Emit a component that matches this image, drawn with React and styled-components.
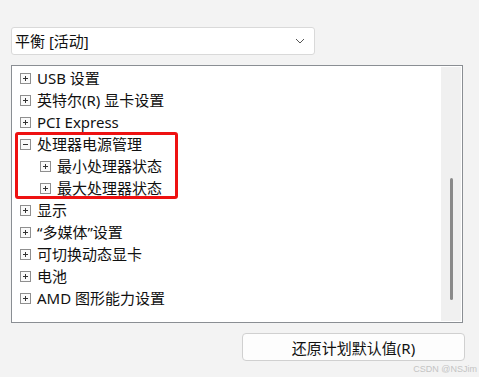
import React from "react";
import styled, { createGlobalStyle } from "styled-components";

const GlobalStyle = createGlobalStyle`
  html, body {
    margin: 0;
    padding: 0;
    background: #f3f3f3;
  }
  body {
    font-family: "Noto Sans", "Noto Sans CJK SC", sans-serif;
    color: #1a1a1a;
  }
`;

const items = [
  { label: "USB 设置", level: 0, open: false },
  { label: "英特尔(R) 显卡设置", level: 0, open: false },
  { label: "PCI Express", level: 0, open: false },
  { label: "处理器电源管理", level: 0, open: true },
  { label: "最小处理器状态", level: 1, open: false },
  { label: "最大处理器状态", level: 1, open: false },
  { label: "显示", level: 0, open: false },
  { label: "“多媒体”设置", level: 0, open: false },
  { label: "可切换动态显卡", level: 0, open: false },
  { label: "电池", level: 0, open: false },
  { label: "AMD 图形能力设置", level: 0, open: false },
];

const App = () => {
  return (
    <Page>
      <GlobalStyle />
      <Select>
        <span>平衡 [活动]</span>
        <svg width="10" height="6" viewBox="0 0 10 6">
          <path d="M1 1 L5 5 L9 1" fill="none" stroke="#555" strokeWidth="1" />
        </svg>
      </Select>
      <ListBox>
        <Tree>
          {items.map((it) => (
            <Row key={it.label} $level={it.level}>
              <Toggle>
                <svg width="11" height="11" viewBox="0 0 11 11">
                  <rect x="0.5" y="0.5" width="10" height="10" fill="#fafafa" stroke="#8f8f8f" />
                  <path d="M3 5.5 H8" stroke="#333" strokeWidth="1" />
                  {!it.open && <path d="M5.5 3 V8" stroke="#333" strokeWidth="1" />}
                </svg>
              </Toggle>
              <Label>{it.label}</Label>
            </Row>
          ))}
          <Highlight />
        </Tree>
        <Track>
          <Thumb />
        </Track>
      </ListBox>
      <Footer>
        <Button>还原计划默认值(R)</Button>
      </Footer>
      <Watermark>CSDN @NSJim</Watermark>
    </Page>
  );
};

export default App;

const Page = styled.div`
  position: relative;
  width: 479px;
  height: 377px;
  box-sizing: border-box;
  padding: 27px 0 0 11px;
  overflow: hidden;
`;

const Select = styled.div`
  width: 304px;
  height: 28px;
  box-sizing: border-box;
  background: #fff;
  border: 1px solid #d9d9d9;
  border-radius: 3px;
  display: flex;
  align-items: center;
  justify-content: space-between;
  padding: 0 9px 0 3px;
  font-size: 15px;
  line-height: 20px;
  color: #111;
`;

const ListBox = styled.div`
  margin-top: 10px;
  width: 452px;
  height: 258px;
  box-sizing: border-box;
  border: 1px solid #8a8e93;
  background: #fff;
  display: flex;
  padding: 1px 1px 1px 0;
`;

const Tree = styled.div`
  position: relative;
  flex: 1;
  display: flex;
  flex-direction: column;
`;

const Row = styled.div`
  height: 22px;
  display: flex;
  align-items: center;
  padding-left: ${(p) => 8 + p.$level * 20}px;
  gap: 6px;
`;

const Toggle = styled.span`
  display: flex;
  width: 11px;
  height: 11px;
`;

const Label = styled.span`
  font-size: 15px;
  line-height: 20px;
  color: #111;
  white-space: nowrap;
`;

const Highlight = styled.div`
  position: absolute;
  left: 3px;
  top: 65px;
  width: 163px;
  height: 67px;
  box-sizing: border-box;
  border: 3px solid #ee1111;
  border-radius: 3px;
`;

const Track = styled.div`
  width: 20px;
  background: #f0f0f0;
  display: flex;
  flex-direction: column;
  align-items: center;
  justify-content: flex-end;
  padding-bottom: 21px;
`;

const Thumb = styled.div`
  width: 3px;
  height: 122px;
  border-radius: 2px;
  background: #8a8a8a;
`;

const Footer = styled.div`
  display: flex;
  justify-content: flex-end;
  padding-right: 14px;
  margin-top: 10px;
`;

const Button = styled.div`
  width: 223px;
  height: 28px;
  box-sizing: border-box;
  border: 1px solid #d0d0d0;
  border-radius: 4px;
  background: #fdfdfd;
  display: flex;
  align-items: center;
  justify-content: center;
  font-size: 15px;
  color: #111;
`;

const Watermark = styled.div`
  position: absolute;
  right: 2px;
  bottom: 3px;
  font-family: "Liberation Sans", Arial, sans-serif;
  font-size: 9px;
  color: #c4c4c4;
`;
